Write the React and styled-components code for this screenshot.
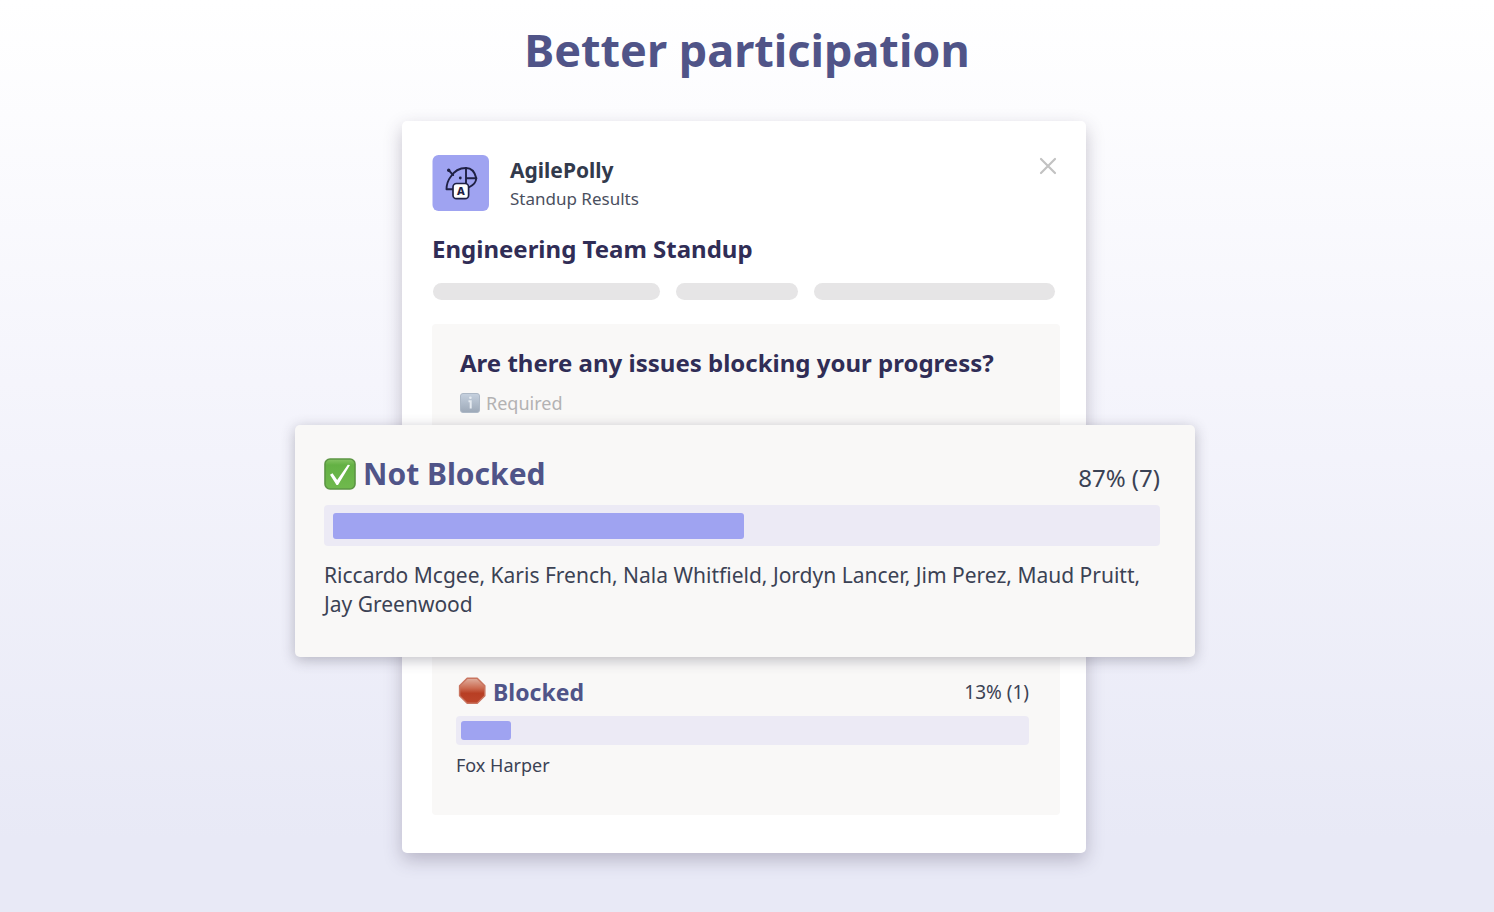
import React from 'react';
import styled, { createGlobalStyle } from 'styled-components';

const GlobalStyle = createGlobalStyle`
  * { box-sizing: border-box; }
  html { min-height: 100%; background: linear-gradient(#ffffff 0%, #f5f5fc 42%, #e8e9f6 92%); }
  body {
    margin: 0;
    color: #3b4254;
    font-family: "Noto Sans", "Open Sans", sans-serif;
  }
  h1, h2, h3, p { margin: 0; font-weight: 700; }
`;

const Page = styled.main`
  display: flex;
  flex-direction: column;
  align-items: center;
  padding: 20px 0 59px;
`;

const PageTitle = styled.h1`
  font-size: 45px;
  line-height: 60px;
  color: #505488;
  text-align: center;
`;

const Card = styled.article`
  width: 100%;
  max-width: 684px;
  margin: 41px 6px 0 0;
  padding: 34px 26px 38px 30px;
  background: #ffffff;
  border-radius: 5px;
  box-shadow: 0 7px 18px rgba(60, 50, 80, 0.28);
`;

const CardHeader = styled.header`
  display: flex;
  align-items: flex-start;
  gap: 21px;
`;

const Logo = styled.svg`
  flex: none;
  width: 57px;
  height: 56px;
`;

const AppInfo = styled.div`
  flex: 1;
  padding-top: 1px;
`;

const AppName = styled.h2`
  font-size: 21px;
  line-height: 29px;
  color: #323a4c;
`;

const AppCaption = styled.p`
  font-size: 17px;
  font-weight: 400;
  line-height: 28px;
  color: #4a4f5e;
`;

const CloseButton = styled.button`
  display: grid;
  place-items: center;
  width: 24px;
  height: 22px;
  padding: 0;
  border: 0;
  background: none;
  color: #c2c2c2;
  cursor: pointer;
`;

const Heading = styled.h2`
  font-size: 24px;
  line-height: 34px;
  color: #302d56;
`;

const CardTitle = styled(Heading)`
  margin-top: 19px;
`;

const Placeholders = styled.div`
  display: grid;
  grid-template-columns: 227fr 123fr 241fr;
  gap: 16px;
  margin-top: 17px;
  padding: 0 5px 0 1px;
`;

const Placeholder = styled.span`
  height: 17px;
  border-radius: 9px;
  background: #e6e5e6;
`;

const Panel = styled.section`
  margin-top: 24px;
  padding: 22px 0 37px;
  border-radius: 4px;
  background: #f9f8f7;
`;

const Question = styled.div`
  padding: 0 28px 9px;
`;

const Required = styled.p`
  display: flex;
  align-items: center;
  gap: 6px;
  margin-top: 10px;
  font-size: 18px;
  font-weight: 400;
  line-height: 26px;
  color: #b3b2b3;
`;

const Answer = styled.section`
  padding: ${({ $featured }) => ($featured ? '29px 35px 38px 29px' : '20px 31px 0 24px')};
  ${({ $featured }) => $featured && `
    position: relative;
    margin: 0 -135px 0 -137px;
    border-radius: 5px;
    background: #f9f8f7;
    box-shadow: 0 3px 14px rgba(60, 55, 75, 0.32);
    @media (max-width: 920px) { margin: 0; }
  `}
`;

const AnswerHeader = styled.div`
  display: flex;
  align-items: flex-end;
  justify-content: space-between;
`;

const AnswerLabel = styled.h3`
  display: flex;
  align-items: center;
  gap: 7px;
  font-size: ${({ $featured }) => ($featured ? '30px' : '23px')};
  line-height: ${({ $featured }) => ($featured ? '40px' : '30px')};
  color: #505488;
`;

const Share = styled.span`
  font-size: ${({ $featured }) => ($featured ? '24px' : '19px')};
  line-height: ${({ $featured }) => ($featured ? '32px' : '30px')};
`;

const Track = styled.div`
  height: ${({ $featured }) => ($featured ? '41px' : '29px')};
  margin-top: ${({ $featured }) => ($featured ? '11px' : '9px')};
  padding: ${({ $featured }) => ($featured ? '8px 9px 7px' : '5px')};
  border-radius: 4px;
  background: #eceaf5;
`;

const Fill = styled.div`
  height: 100%;
  border-radius: 3px;
  background: #9fa3f1;
`;

const Voters = styled.p`
  margin-top: ${({ $featured }) => ($featured ? '15px' : '7px')};
  font-size: ${({ $featured }) => ($featured ? '21px' : '18px')};
  font-weight: 400;
  line-height: ${({ $featured }) => ($featured ? '29px' : '26px')};
`;

const Icon = styled.svg`
  flex: none;
`;

const PollyLogo = () => (
  <Logo viewBox="0 0 57 56" role="img" aria-label="AgilePolly logo">
    <rect x=".5" width="56.500" height="56" rx="6" fill="#9fa3f1" />
    <g fill="none" stroke="#1f2145" strokeWidth="1.9" strokeLinecap="round" strokeLinejoin="round">
      <path d="M22 34.300h-7.500c.1-4.800 1.300-8.800 4-12.300C22.200 16 27.800 13 34 13c5.300 0 8.800 3.600 10.300 10.300" />
      <path d="M34 13V28M34 23.300H44.300c-.3 4.200-2.600 6.700-6.800 8.700" />
      <path d="M17 15.600l4.200 4.400" />
    </g>
    <circle cx="16.700" cy="15.300" r="1.700" fill="#1f2145" />
    <circle cx="28.300" cy="23" r="1.400" fill="#1f2145" />
    <rect x="21" y="28.500" width="15.600" height="15.200" rx="3.500" fill="#fff" stroke="#1f2145" strokeWidth="1.700" />
    <text x="28.800" y="40.200" textAnchor="middle" fontSize="11" fontWeight="800" fill="#1f2145">A</text>
  </Logo>
);

const CheckIcon = () => (
  <Icon width="32" height="32" viewBox="0 0 32 32" aria-hidden="true">
    <defs>
      <linearGradient id="check-face" x2="0" y2="1">
        <stop offset="0" stopColor="#86c465" />
        <stop offset=".2" stopColor="#64b144" />
        <stop offset="1" stopColor="#70b94d" />
      </linearGradient>
    </defs>
    <rect x="1" y="1" width="30" height="30" rx="5" fill="url(#check-face)" stroke="#5c9544" strokeWidth="1.600" />
    <path d="M6 16.800l2.500-1.500 4.700 6.700L23.800 6.800l2.200.2L14 27h-1.500z" fill="#fff" />
  </Icon>
);

const StopIcon = () => (
  <Icon width="30" height="30" viewBox="0 0 30 30" aria-hidden="true">
    <defs>
      <linearGradient id="stop-face" x2="0" y2="1">
        <stop offset="0" stopColor="#e0b0a0" />
        <stop offset=".4" stopColor="#cb6a50" />
        <stop offset=".6" stopColor="#b83f24" />
        <stop offset="1" stopColor="#bd452b" />
      </linearGradient>
    </defs>
    <path d="M11.200 1.200h10L28.800 8.700v10l-7.600 7.600h-10L3.600 18.700v-10z" fill="url(#stop-face)" stroke="#c9745f" strokeWidth="1.500" strokeLinejoin="round" />
  </Icon>
);

const InfoIcon = () => (
  <Icon width="20" height="20" viewBox="0 0 20 20" aria-hidden="true">
    <defs>
      <linearGradient id="info-face" x2="0" y2="1">
        <stop offset="0" stopColor="#c6d1df" />
        <stop offset="1" stopColor="#9da9b8" />
      </linearGradient>
    </defs>
    <rect x=".5" y=".5" width="19" height="19" rx="2.500" fill="url(#info-face)" stroke="#adb8c6" />
    <path d="M8.500 8.200h2.200v7.300" fill="none" stroke="#e6ebf1" strokeWidth="2" />
    <circle cx="10.400" cy="4.800" r="1.300" fill="#e6ebf1" />
  </Icon>
);

const answers = [
  {
    label: 'Not Blocked',
    icon: CheckIcon,
    share: '87% (7)',
    fill: 50.2,
    voters: 'Riccardo Mcgee, Karis French, Nala Whitfield, Jordyn Lancer, Jim Perez, Maud Pruitt, Jay Greenwood',
    featured: true,
  },
  { label: 'Blocked', icon: StopIcon, share: '13% (1)', fill: 8.9, voters: 'Fox Harper', featured: false },
];

export default function App() {
  return (
    <>
      <GlobalStyle />
      <Page>
        <PageTitle>Better participation</PageTitle>
        <Card>
          <CardHeader>
            <PollyLogo />
            <AppInfo>
              <AppName>AgilePolly</AppName>
              <AppCaption>Standup Results</AppCaption>
            </AppInfo>
            <CloseButton type="button" aria-label="Close">
              <svg width="18" height="18" viewBox="0 0 18 18" fill="none" stroke="currentColor" strokeWidth="2.200" strokeLinecap="round">
                <path d="M2 2l14 14M16 2L2 16" />
              </svg>
            </CloseButton>
          </CardHeader>
          <CardTitle>Engineering Team Standup</CardTitle>
          <Placeholders aria-hidden="true">
            <Placeholder />
            <Placeholder />
            <Placeholder />
          </Placeholders>
          <Panel>
            <Question>
              <Heading as="h3">Are there any issues blocking your progress?</Heading>
              <Required>
                <InfoIcon />
                Required
              </Required>
            </Question>
            {answers.map(({ label, icon: AnswerIcon, share, fill, voters, featured }) => (
              <Answer key={label} $featured={featured}>
                <AnswerHeader>
                  <AnswerLabel $featured={featured}>
                    <AnswerIcon />
                    {label}
                  </AnswerLabel>
                  <Share $featured={featured}>{share}</Share>
                </AnswerHeader>
                <Track $featured={featured}>
                  <Fill style={{ width: `${fill}%` }} />
                </Track>
                <Voters $featured={featured}>{voters}</Voters>
              </Answer>
            ))}
          </Panel>
        </Card>
      </Page>
    </>
  );
}
